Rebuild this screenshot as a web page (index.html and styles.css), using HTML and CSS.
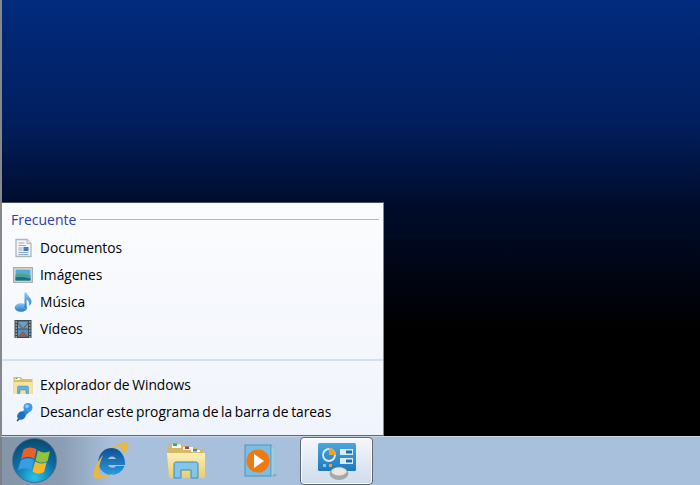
FILE: index.html
```html
<!DOCTYPE html>
<html lang="es">
<head>
<meta charset="utf-8">
<title>Windows 7</title>
<link rel="stylesheet" href="styles.css">
</head>
<body>
<div class="screen">
  <main class="desktop">
    <section class="jumplist">
      <div class="upper">
        <div class="heading"><span>Frecuente</span><i class="rule"></i></div>
        <ul class="items">
          <li><svg class="ico" viewBox="0 0 20 20"><path d="M3 1.500h11l4 4v13H3z" fill="#f3f5f8" stroke="#b0b5ba" stroke-width="1.300"/><path d="M14 1.500v4h4" fill="#e4e8ec" stroke="#b0b5ba"/><path d="M5.500 5h6M5.500 7.500h7.500M5.500 10h4M5.500 12h4M5.500 14.500h10M5.500 16.500h10" stroke="#8fa9c8"/><rect x="10.500" y="9" width="5" height="4" fill="#3f7fb5"/></svg>Documentos</li>
          <li><svg class="ico" viewBox="0 0 20 20"><rect x="0.700" y="2.700" width="18.600" height="14.600" fill="#e6e8ea" stroke="#a4a9ae" stroke-width="1.300"/><rect x="2.500" y="4.500" width="15" height="11" fill="#5aa8d8"/><path d="M2.500 9.500c4-2 9-1 15 1v5h-15z" fill="#4aa585"/><path d="M2.500 12.500c6-1 10 0 15 1v2h-15z" fill="#1b6c8e"/></svg>Imágenes</li>
          <li><svg class="ico" viewBox="0 0 20 20"><defs><linearGradient id="note" x1="0" y1="0" x2="0" y2="1"><stop offset="0" stop-color="#8cc8f2"/><stop offset="1" stop-color="#1f78d2"/></linearGradient></defs><ellipse cx="8" cy="15.500" rx="6.300" ry="4.300" fill="url(#note)"/><path d="M11.500 15.500V0.500h2c0 3 5 5 5 9 0 2-1 3-2 4.500 0-4-1-5.500-3-6.500v8z" fill="url(#note)"/></svg>Música</li>
          <li><svg class="ico" viewBox="0 0 20 20"><rect x="1.500" y="1" width="17" height="18" fill="#3c4a50"/><rect x="5" y="2.500" width="10" height="7" fill="#5aa6dc"/><rect x="5" y="10.500" width="10" height="7" fill="#4a94d0"/><path d="M5 3l5 6 5-6v2l-3.500 4.500h-3L5 5z" fill="#a45a32"/><path d="M5 17.500l5-5.500 5 5.500z" fill="#a45a32"/><path d="M2.500 3H4M2.500 6H4M2.500 9H4M2.500 12H4M2.500 15H4M2.500 18H4M16 3h1.500M16 6h1.500M16 9h1.500M16 12h1.500M16 15h1.500M16 18h1.500" stroke="#dfe6ea"/></svg>Vídeos</li>
        </ul>
      </div>
      <ul class="items lower">
        <li><svg class="ico" viewBox="0 0 20 20"><path d="M0.500 2h7l2 2h10v15H0.500z" fill="#d9bd6e"/><path d="M2 3h5v2H2z" fill="#fff"/><rect x="2.500" y="3" width="2" height="1" fill="#3cb43c"/><path d="M0.500 7h19v12H0.500z" fill="#f7e3a0"/><path d="M4.500 18.500v-6c0-1 .5-1.500 1.500-1.500h8c1 0 1.500.5 1.500 1.500v6H13v-3.500H7v3.500z" fill="#62b0e0" stroke="#3f8ab5" stroke-width=".5"/></svg>Explorador de Windows</li>
        <li><svg class="ico" viewBox="0 0 20 20"><path d="M4 19l5-5" stroke="#1b4f8f" stroke-width="1.600"/><ellipse cx="8.500" cy="13.500" rx="4.800" ry="3.800" fill="#1f6fc0" transform="rotate(-40 8.500 13.500)"/><path d="M10 9l4-4 3.500 4-4.500 4z" fill="#2f86d8"/><circle cx="15" cy="5.500" r="4.500" fill="#3b9ae8"/><circle cx="14" cy="4.300" r="1.800" fill="#9ad0f6"/></svg>Desanclar este programa de la barra de tareas</li>
      </ul>
    </section>
  </main>
  <footer class="taskbar">
    <div class="start">
      <div class="orb">
        <svg class="flag" viewBox="0 0 30 30"><path d="M5 5c4-2.500 8-2.500 12 0l-2.300 8.500c-4-2.500-8-2.500-12 .5z" fill="#e8602a"/><path d="M18 6c4 2.200 7.500 2.200 11 .5l-2 9c-4 2-7.500 2-11-.5z" fill="#93c23a"/><path d="M2.500 15c4-2.700 8-2.700 12-.5l-2.500 9c-4-2-8-2-12 .5z" fill="#3a9be6"/><path d="M15.500 16c3.500 2.200 7 2.200 10.500.5l-2.300 9c-3.500 2-7 2-10.500-.5z" fill="#f7b72a"/></svg>
      </div>
    </div>
    <div class="tasks">
      <div class="task"><svg class="app" viewBox="0 0 40 40"><defs><linearGradient id="ie" x1="0" y1="0" x2="0" y2="1"><stop offset="0" stop-color="#0e4f96"/><stop offset="1" stop-color="#2a9be0"/></linearGradient></defs><path d="M9 16C16 8 30 0 36 1.500c3 1 1 7-3 11-1-3-3-5-5-6.500 3-1 6-2 7-2-5-1-16 4-23 13z" fill="#e9b83c"/><path d="M21 7a13.500 13.500 0 1 0 12.500 18H25c-1.500 2.500-6.500 2.500-8-1h17.200c.5-8-5-17-13.200-17zm-4 11c1-3.500 7-3.500 8 0z" fill="url(#ie)"/><path d="M3 38C1 32 5 22 12 14c-3 7-5 14-4 19 4 2 10 2 15-1-5 4-13 7-20 5z" fill="#e9b83c"/></svg></div>
      <div class="task"><svg class="app" viewBox="0 0 40 40"><defs><linearGradient id="fold" x1="0" y1="0" x2="0" y2="1"><stop offset="0" stop-color="#fdf0b8"/><stop offset="1" stop-color="#eccb70"/></linearGradient></defs><path d="M1 6l2-2h14l3 2h10l2 2h4c1 0 2 1 2 2v26H3z" fill="#d6b866"/><path d="M6 3.500h9V7H6zM17 6h10v3H17zM25 9h9v2h-9z" fill="#fbfbf5"/><rect x="7" y="2.500" width="4" height="2.500" fill="#2fb52f"/><rect x="19" y="5.500" width="4" height="2.500" fill="#c0392b"/><rect x="27" y="8" width="4" height="2.500" fill="#2c8fdc"/><path d="M1 12h38v25H3z" fill="url(#fold)"/><path d="M8 37V23c0-1 1-2 2-2h20c1 0 2 1 2 2v14h-7v-8H15v8z" fill="#82c6e8" stroke="#3f8ab5"/></svg></div>
      <div class="task"><svg class="app" viewBox="0 0 40 40"><rect x="14" y="6" width="20" height="28" fill="#a9d3ea" stroke="#8fbcd6"/><rect x="10" y="5" width="22" height="30" fill="#bcdff0" stroke="#8fbcd6"/><rect x="4" y="4" width="26" height="31" fill="#7cbde2" stroke="#4f93bb"/><circle cx="17" cy="20" r="11.500" fill="#f07a10"/><path d="M13 13l10 7-10 7z" fill="#fff"/><path d="M32 36l5-2-5-1z" fill="#8ea4bd"/></svg></div>
      <div class="task active"><svg class="app" viewBox="0 0 40 40"><defs><linearGradient id="cp" x1="0" y1="0" x2="0" y2="1"><stop offset="0" stop-color="#4ba5dd"/><stop offset="1" stop-color="#1f78bd"/></linearGradient></defs><rect x="1" y="2" width="38" height="28" rx="1.500" fill="url(#cp)"/><circle cx="12" cy="14" r="6" fill="none" stroke="#d6ecf9" stroke-width="1.800"/><path d="M12 7v7h7a7 7 0 0 0-7-7z" fill="#f4a11c"/><rect x="23" y="8" width="13" height="6" fill="#d8edf9"/><rect x="29" y="9.500" width="6" height="3" fill="#1f6ea8"/><rect x="23" y="17" width="13" height="6" fill="#d8edf9"/><rect x="29" y="18.500" width="6" height="3" fill="#1f6ea8"/><rect x="6" y="23" width="3" height="3" fill="#8cc6ea"/><rect x="12" y="23" width="3" height="3" fill="#f4a11c"/><ellipse cx="22" cy="32.500" rx="9.500" ry="6.500" fill="#a8a8a4"/><ellipse cx="22" cy="30.500" rx="7.500" ry="4" fill="#e6e6e3"/></svg></div>
    </div>
  </footer>
</div>
</body>
</html>
```
FILE: styles.css
```css
* { box-sizing: border-box; }
html, body { margin: 0; padding: 0; }
.screen { width: 700px; height: 485px; display: flex; flex-direction: column; overflow: hidden; font-family: "Open Sans", "Noto Sans", sans-serif; }
.desktop { position: relative; height: 436px; border-left: 2px solid #85888c; background: linear-gradient(180deg, #012b7e 0, #011f5f 120px, #000c2c 205px, #000 330px); }
.jumplist { position: absolute; left: 0; bottom: 0; width: 382px; height: 234px; display: flex; flex-direction: column; background: linear-gradient(180deg, #fbfcfe 0, #f0f4fc 100%); border-top: 1px solid #4a4f55; border-right: 1px solid #7e8a96; border-bottom: 1px solid #5e666e; }
.upper { height: 158px; padding: 7px 0 0 9px; border-bottom: 2px solid #d3e0ee; }
.heading { display: flex; align-items: center; gap: 4px; height: 18px; color: #2a3fa8; font-size: 14px; }
.rule { flex: 1; height: 1px; margin-right: 4px; background: #a3bbe4; }
.items { list-style: none; margin: 0; padding: 0; color: #000; font-size: 13.800px; word-spacing: -1px; }
.items li { display: flex; align-items: center; height: 27px; gap: 7px; }
.upper .items { margin-top: 6px; padding-left: 2px; }
.lower { padding: 10px 0 0 11px; }
.ico { width: 20px; height: 20px; flex: none; filter: blur(.3px); }
.taskbar { height: 49px; display: flex; border-left: 2px solid #7a8088; background: linear-gradient(90deg, #8595a8 0, #8b9db3 60px, #a9c0dc 110px, #a9c0dc 100%); border-top: 1px solid #c9d6e4; }
.start { width: 71px; display: flex; padding: 1px 0 0 10px; }
.orb { width: 45px; height: 45px; border-radius: 50%; display: flex; align-items: center; justify-content: center; background: radial-gradient(circle at 50% 90%, #28c4f0 0, #0a6ba0 50%, #0a3c60 100%); border: 1px solid #4a6a88; }
.flag { width: 33px; height: 33px; filter: blur(.4px); }
.tasks { display: flex; }
.task { width: 75px; height: 48px; display: flex; align-items: center; justify-content: center; }
.task.active { width: 73px; margin-left: 2px; border: 1px solid #5e666e; border-radius: 4px; background: linear-gradient(180deg, #f4f7fb, #cfdcec); box-shadow: inset 0 0 0 1px #fff; }
.app { width: 40px; height: 40px; filter: blur(.3px); }
```
